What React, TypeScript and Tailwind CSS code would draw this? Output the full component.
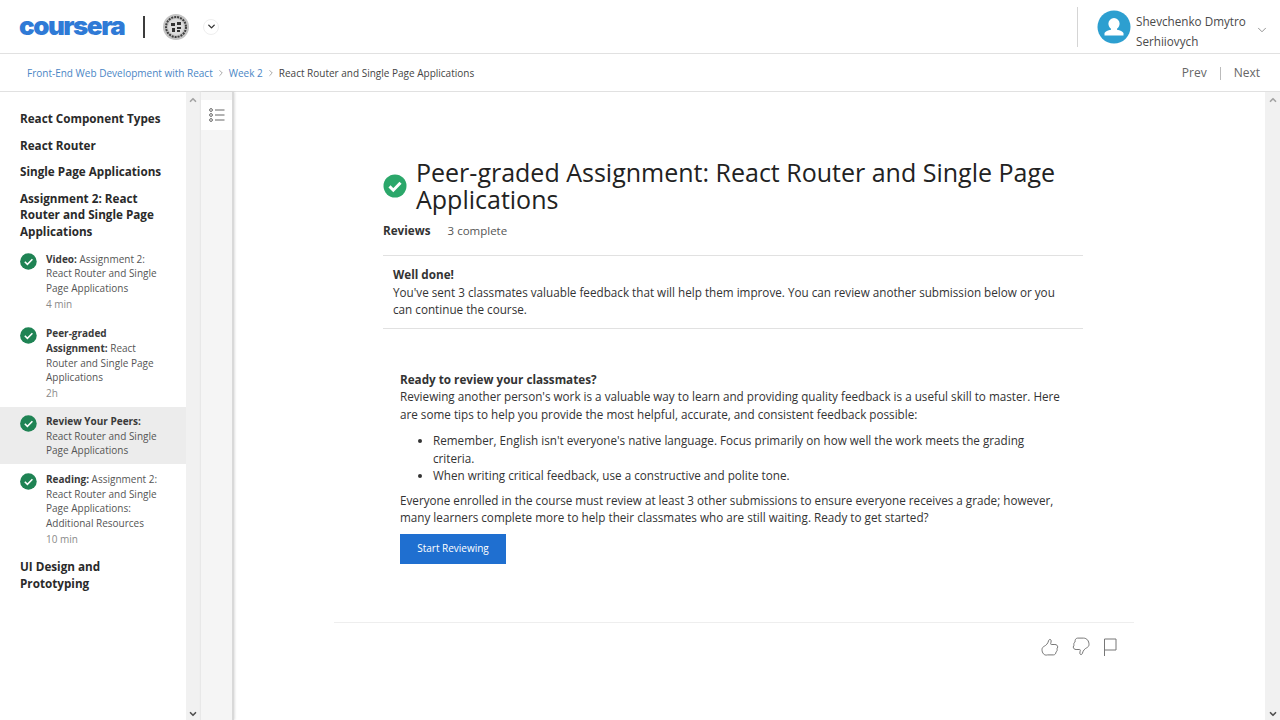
import { ChevronDown, ChevronRight, ChevronUp } from "lucide-react";

const ITEMS = [
  { bold: "Video:", rest: " Assignment 2: React Router and Single Page Applications", meta: "4 min", active: false, pt: "pt-[12.5px]", pb: "pb-[9px]" },
  { bold: "Peer-graded Assignment:", rest: " React Router and Single Page Applications", meta: "2h", active: false, pt: "pt-[6px]", pb: "pb-[6px]" },
  { bold: "Review Your Peers:", rest: " React Router and Single Page Applications", meta: "", active: true, pt: "pt-[7px]", pb: "pb-[6px]" },
  { bold: "Reading:", rest: " Assignment 2: React Router and Single Page Applications: Additional Resources", meta: "10 min", active: false, pt: "pt-[8px]", pb: "pb-[6px]" },
];

function SmallCheck() {
  return (
    <svg width="17" height="17" viewBox="0 0 17 17" className="shrink-0 mt-[1px]">
      <circle cx="8.4" cy="8.5" r="8.3" fill="#1f8354" />
      <path d="M4.8 8.7l2.6 2.6 5-5" fill="none" stroke="#fff" strokeWidth="1.6" />
    </svg>
  );
}

function Scrollbar({ className }: { className: string }) {
  return (
    <div className={`flex flex-col items-center justify-between bg-[#f1f1f1] ${className}`}>
      <ChevronUp size={10} strokeWidth={4} className="text-[#a3a3a3] mt-[3px]" />
      <ChevronDown size={10} strokeWidth={4} className="text-[#505050] mb-[1px]" />
    </div>
  );
}

export default function App() {
  return (
    <div className="w-[1280px] h-[720px] overflow-hidden bg-white flex flex-col text-[#1f1f1f] font-['Open_Sans',sans-serif]">
      <header className="h-[54px] shrink-0 border-b border-[#e1e1e1] flex items-center pl-[20px] pr-[11px]">
        <span className="w-[107px] text-[#2f7ad6] text-[26px] leading-[28px] font-black tracking-[-1.5px] font-['Inter',sans-serif] -mt-[2px] -indent-[1px]">coursera</span>
        <div className="w-[2px] h-[22px] bg-[#3c3c3c] ml-[16px] mt-[1px]" />
        <svg width="26" height="26" viewBox="0 0 26 26" className="ml-[18px]">
          <circle cx="13" cy="13" r="13" fill="#c4c4c4" />
          <circle cx="13" cy="13" r="10" fill="none" stroke="#3f3f3f" strokeWidth="2" strokeDasharray="2 1" />
          <circle cx="13" cy="13" r="8" fill="#dcdcdc" />
          <path d="M8 9h4v3H8zM14 8h4v3h-4zM9 14h3v4H9zM14 13h4v2h-4zM14 16h3v2h-3z" fill="#333333" />
        </svg>
        <div className="w-[16px] h-[16px] ml-[14px] rounded-full border border-[#eeeeee] flex items-center justify-center">
          <ChevronDown size={11} strokeWidth={3} className="text-[#333333]" />
        </div>
        <div className="flex-1" />
        <div className="w-px h-[40px] bg-[#d5d5d5] mt-[1px]" />
        <svg width="34" height="34" viewBox="0 0 34 34" className="ml-[19px]">
          <circle cx="17" cy="17" r="16.5" fill="#2d9fd0" />
          <path d="M17 8a5.6 5.6 0 0 1 5.6 5.6c0 2.2-1 4.2-2.6 5.1v1.1c3.200.6 5.700 1.700 6.500 3.200v2.600H7.500V23c.8-1.500 3.300-2.600 6.500-3.200v-1.100c-1.600-.9-2.600-2.900-2.600-5.100A5.600 5.600 0 0 1 17 8z" fill="#fff" />
        </svg>
        <div className="w-[116px] ml-[5px] mt-[8px] text-[11.7px] leading-[20px] text-[#4a4a4a]">Shevchenko Dmytro Serhiiovych</div>
        <ChevronDown size={14} strokeWidth={1.2} className="text-[#666666] ml-[3px] mt-[6px]" />
      </header>

      <div className="h-[38px] shrink-0 border-b border-[#e1e1e1] flex items-center pl-[27px] pr-[20px] pt-[1px] text-[10px]">
        <span className="text-[#4a86c5]">Front-End Web Development with React</span>
        <ChevronRight size={10} className="text-[#999999] mx-[3px]" />
        <span className="text-[#4a86c5]">Week 2</span>
        <ChevronRight size={10} className="text-[#999999] mx-[3px]" />
        <span className="text-[#444444]">React Router and Single Page Applications</span>
        <div className="flex-1" />
        <span className="text-[12px] text-[#666666]">Prev</span>
        <div className="w-px h-[13px] bg-[#bbbbbb] mx-[13px]" />
        <span className="text-[12px] text-[#666666]">Next</span>
      </div>

      <div className="flex-1 flex min-h-0">
        <aside className="w-[186px] shrink-0 pt-[18px]">
          <div className="pl-[20px] pr-[20px] text-[11.7px] leading-[16.5px] font-bold text-[#2a2a2a] flex flex-col gap-[10px]">
            <div>React Component Types</div>
            <div>React Router</div>
            <div>Single Page Applications</div>
            <div>Assignment 2: React Router and Single Page Applications</div>
          </div>
          <div>
            {ITEMS.map((it) => (
              <div key={it.bold} className={`flex pl-[20px] pr-[26px] gap-[9px] ${it.pt} ${it.pb} ${it.active ? "bg-[#ececec]" : ""}`}>
                <SmallCheck />
                <div className="text-[10px] leading-[14.7px] text-[#555555]">
                  <span className="font-bold text-[#3a3a3a]">{it.bold}</span>
                  {it.rest}
                  {it.meta && <div className="text-[#8a8a8a] mt-[1px]">{it.meta}</div>}
                </div>
              </div>
            ))}
          </div>
          <div className="pl-[20px] pr-[20px] pt-[6px] text-[11.7px] leading-[16.5px] font-bold text-[#2a2a2a]">UI Design and Prototyping</div>
        </aside>
        <Scrollbar className="w-[14px] shrink-0" />
        <div className="w-[34px] shrink-0 bg-[#f5f5f5] border-l border-l-[#e8e8e8] border-r-[2px] border-r-[#d9d9d9] shadow-[1px_0_2px_rgba(0,0,0,0.12)] pt-[8px]">
          <div className="h-[30px] bg-white flex items-center justify-center">
            <svg width="16" height="16" viewBox="0 0 16 16" fill="none" stroke="#666666" strokeWidth="1">
              <circle cx="2" cy="3" r="1.4" />
              <circle cx="2" cy="8" r="1.4" />
              <circle cx="2" cy="13" r="1.4" />
              <path d="M6 3h9.500M6 8h9.500M6 13h9.500" />
            </svg>
          </div>
        </div>

        <main className="flex-1 min-w-0 pl-[100px]">
          <div className="w-[800px] pt-[67px]">
            <div className="w-[700px] ml-[49px]">
              <div className="flex items-center gap-[9px]">
                <svg width="24" height="24" viewBox="0 0 24 24" className="shrink-0">
                  <circle cx="12" cy="12" r="11.5" fill="#2ba76a" />
                  <path d="M6.500 12.400l3.800 3.800 7.200-7.400" fill="none" stroke="#fff" strokeWidth="3" />
                </svg>
                <h1 className="text-[25px] leading-[27px] text-[#222222]">Peer-graded Assignment: React Router and Single Page Applications</h1>
              </div>
              <div className="flex mt-[8px] leading-[18px] gap-[17px] items-baseline">
                <span className="text-[11.7px] font-bold text-[#333333]">Reviews</span>
                <span className="text-[11.5px] text-[#555555]">3 complete</span>
              </div>
              <div className="mt-[15px] border-y border-[#e1e1e1] pl-[10px] pr-[20px] pt-[10px] pb-[9px] text-[11.7px] leading-[17.5px] text-[#333333]">
                <div className="font-bold">Well done!</div>
                <div>You've sent 3 classmates valuable feedback that will help them improve. You can review another submission below or you can continue the course.</div>
              </div>
              <div className="pl-[17px] pr-[20px] pt-[42px] text-[11.7px] leading-[17.5px] text-[#333333]">
                <div className="font-bold">Ready to review your classmates?</div>
                <p>Reviewing another person's work is a valuable way to learn and providing quality feedback is a useful skill to master. Here are some tips to help you provide the most helpful, accurate, and consistent feedback possible:</p>
                <ul className="list-disc pl-[33px] mt-[9px] pr-[20px]">
                  <li>Remember, English isn't everyone's native language. Focus primarily on how well the work meets the grading criteria.</li>
                  <li>When writing critical feedback, use a constructive and polite tone.</li>
                </ul>
                <p className="mt-[7px]">Everyone enrolled in the course must review at least 3 other submissions to ensure everyone receives a grade; however, many learners complete more to help their classmates who are still waiting. Ready to get started?</p>
                <button className="block mt-[7px] w-[106px] h-[30px] bg-[#1f6fd0] text-white text-[10px]">Start Reviewing</button>
              </div>
            </div>
            <div className="mt-[58px] border-t border-[#eeeeee] flex justify-end gap-[13px] pt-[14px] pr-[17px]">
              <svg width="18" height="20" viewBox="0 0 18 20" fill="none" stroke="#777777" strokeWidth="1">
                <path d="M1 12.500c0-1.600 1-2.600 2.300-3.300 2-1 3.500-2.600 4.200-5.200.3-1.200 1.200-2 2-1.500.9.5.7 2.200.2 4-.1.5 0 1 .6 1h3.600c1.600 0 2.800 1 2.800 2.400 0 1-.4 1.500-.9 2 .4.5.5 1 .3 1.700-.2.6-.6 1-1.100 1.300.1 1.300-.8 3-2.600 3H6.500C3 18.900 1 15.900 1 12.500z" />
              </svg>
              <svg width="18" height="20" viewBox="0 0 18 20" fill="none" stroke="#777777" strokeWidth="1">
                <path d="M17 7.500c0 1.600-1 2.600-2.300 3.300-2 1-3.500 2.600-4.200 5.200-.3 1.200-1.200 2-2 1.500-.9-.5-.7-2.200-.2-4 .1-.5 0-1-.6-1H4.100c-1.600 0-2.800-1-2.800-2.400 0-1 .4-1.500.9-2-.4-.5-.5-1-.3-1.700.2-.6.6-1 1.100-1.300C2.900 2.800 3.800 1.100 5.600 1.100h5.900C15 1.100 17 4.100 17 7.500z" />
              </svg>
              <svg width="14" height="20" viewBox="0 0 14 20" fill="none" stroke="#777777" strokeWidth="1">
                <path d="M1.500 19V2h11.500v11H1.500" />
              </svg>
            </div>
          </div>
        </main>
        <Scrollbar className="w-[15px] shrink-0" />
      </div>
    </div>
  );
}
